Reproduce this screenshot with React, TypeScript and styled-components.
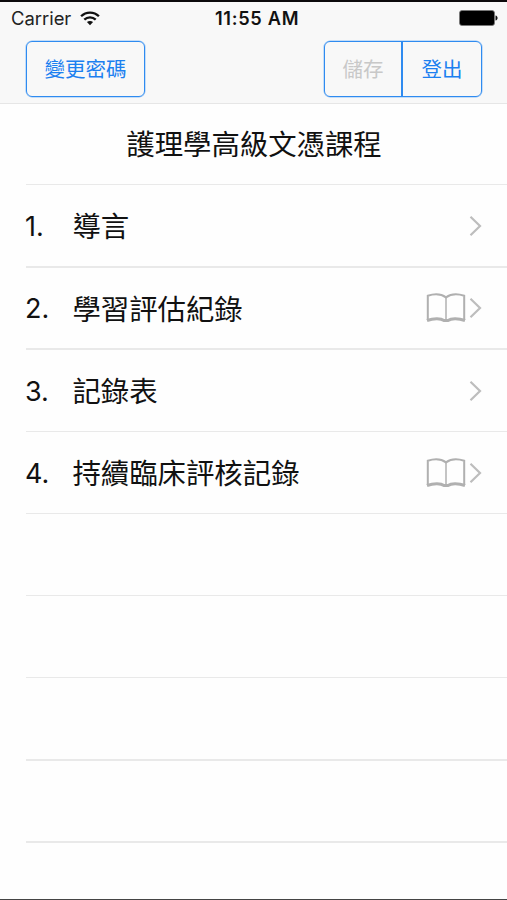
import React from "react";
import styled, { createGlobalStyle } from "styled-components";

const GlobalStyle = createGlobalStyle`
  * { box-sizing: border-box; }
  body { margin: 0; background: #fefefe; }
`;

const Screen = styled.div`
  display: flex;
  flex-direction: column;
  width: 507px;
  height: 900px;
  overflow: hidden;
  background: #fefefe;
  border-top: 2px solid #0c0a0c;
  border-bottom: 1px solid #444;
  color: #111;
  font-family: Inter, "Noto Sans CJK TC", sans-serif;
`;

const Header = styled.header`
  height: 102px;
  flex: none;
  background: #f8f8f8;
  border-bottom: 1px solid #e6e6e6;
`;

const StatusBar = styled.div`
  display: grid;
  grid-template-columns: 1fr auto 1fr;
  align-items: center;
  height: 32px;
  padding: 0 9px 0 11px;
  font-size: 18px;
  line-height: 32px;
`;

const Carrier = styled.div`
  display: flex;
  align-items: center;
  gap: 9px;
  font-size: 18.4px;
  color: #222;
`;

const Clock = styled.div`
  padding: 1px 0 0 5px;
  font-weight: 600;
  font-size: 18.2px;
  line-height: 31px;
  letter-spacing: 0.7px;
`;

const BatterySlot = styled.div`
  display: flex;
  justify-content: flex-end;
`;

const NavBar = styled.nav`
  display: flex;
  justify-content: space-between;
  padding: 7px 25px 0 26px;
`;

const ButtonGroup = styled.div`
  display: flex;
  height: 56px;
  border: 1.5px solid #2f8bf0;
  box-shadow: 0 0 0 0.5px #8fc2f7;
  border-radius: 6px;
  overflow: hidden;
`;

const NavButton = styled.button<{ $width: number }>`
  width: ${(p) => p.$width}px;
  padding: 2px 0 0;
  border: 0;
  background: transparent;
  color: #1c80f0;
  font: 400 20.5px/1 Inter, "Noto Sans CJK TC", sans-serif;
  white-space: nowrap;
  &:disabled { color: #c8c8c8; }
  & + & { border-left: 2px solid #2f8bf0; }
`;

const Title = styled.h1`
  display: flex;
  align-items: center;
  justify-content: center;
  flex: none;
  height: 80px;
  margin: 0;
  padding: 2px 0 0 1px;
  font-size: 28.4px;
  line-height: 40px;
  font-weight: 400;
`;

const List = styled.ol`
  margin: 0 0 0 26px;
  padding: 0;
  list-style: none;
`;

const Row = styled.li<{ $height: number; $line: number }>`
  display: flex;
  align-items: center;
  height: ${(p) => p.$height}px;
  padding-right: 25px;
  font-size: 28.4px;
  line-height: 40px;
  border-bottom: ${(p) => p.$line}px solid #e9e9e9;
`;

const Index = styled.span`
  width: 47.4px;
  margin-left: -1px;
  padding-top: 2px;
  font-size: 27px;
`;

const Label = styled.span`
  flex: 1;
  padding-top: 3px;
  white-space: nowrap;
`;

const Accessory = styled.span`
  display: flex;
  align-items: center;
  gap: 3px;
`;

const WifiIcon = () => (
  <svg width="20" height="15" viewBox="0 0 20 15" fill="none" stroke="#111" strokeWidth="2.3">
    <path d="M1.1 5.3C6 .3 14 .3 18.9 5.3" />
    <path d="M4.3 8.6C7.5 5.5 12.5 5.5 15.7 8.6" />
    <path d="M10 14.3 6.9 11.1C8.6 9.6 11.4 9.6 13.1 11.1Z" fill="#111" stroke="none" />
  </svg>
);

const BatteryIcon = () => (
  <svg width="39" height="16" viewBox="0 0 39 16">
    <rect x=".5" y=".5" width="35" height="15" rx="2.5" fill="#000" stroke="#777" strokeWidth=".8" />
    <path d="M36.5 5.5C39.3 6 39.3 10 36.5 10.5Z" fill="#111" />
  </svg>
);

const BookIcon = () => (
  <svg width="40" height="30" viewBox="0 0 40 30" fill="none" stroke="#b0b0b0">
    <path d="M1.8 27V2.8C8 .8 15 .8 20 4.4C25 .8 32 .8 38.2 2.8V27" strokeWidth="2" />
    <path d="M20 4.5V26" strokeWidth="1.5" />
    <path d="M1 27.5C8 25 15 25.3 18 27.5H22C25 25.3 32 25 39 27.5" strokeWidth="3" />
  </svg>
);

const ChevronIcon = () => (
  <svg width="13" height="22" viewBox="0 0 13 22" fill="none" stroke="#bdbdbd" strokeWidth="2.2">
    <path d="M1.5 1.7 11 11 1.5 20.3" />
  </svg>
);

type Entry = { height: number; line: number; label?: string; book?: boolean };

const entries: Entry[] = [
  { height: 83, line: 2, label: "導言" },
  { height: 82, line: 2, label: "學習評估紀錄", book: true },
  { height: 82, line: 1, label: "記錄表" },
  { height: 82, line: 1, label: "持續臨床評核記錄", book: true },
  { height: 82, line: 1 },
  { height: 82, line: 1 },
  { height: 83, line: 2 },
  { height: 82, line: 2 },
];

export default function App() {
  return (
    <Screen>
      <GlobalStyle />
      <Header>
        <StatusBar>
          <Carrier>Carrier <WifiIcon /></Carrier>
          <Clock>11:55 AM</Clock>
          <BatterySlot><BatteryIcon /></BatterySlot>
        </StatusBar>
        <NavBar>
          <ButtonGroup><NavButton $width={117}>變更密碼</NavButton></ButtonGroup>
          <ButtonGroup>
            <NavButton $width={76} disabled>儲存</NavButton>
            <NavButton $width={80}>登出</NavButton>
          </ButtonGroup>
        </NavBar>
      </Header>
      <Title>護理學高級文憑課程</Title>
      <List>
        <Row as="div" $height={1} $line={1} />
        {entries.map((entry, i) => (
          <Row key={i} $height={entry.height} $line={entry.line}>
            {entry.label && (
              <>
                <Index>{i + 1}.</Index>
                <Label>{entry.label}</Label>
                <Accessory>
                  {entry.book && <BookIcon />}
                  <ChevronIcon />
                </Accessory>
              </>
            )}
          </Row>
        ))}
      </List>
    </Screen>
  );
}
